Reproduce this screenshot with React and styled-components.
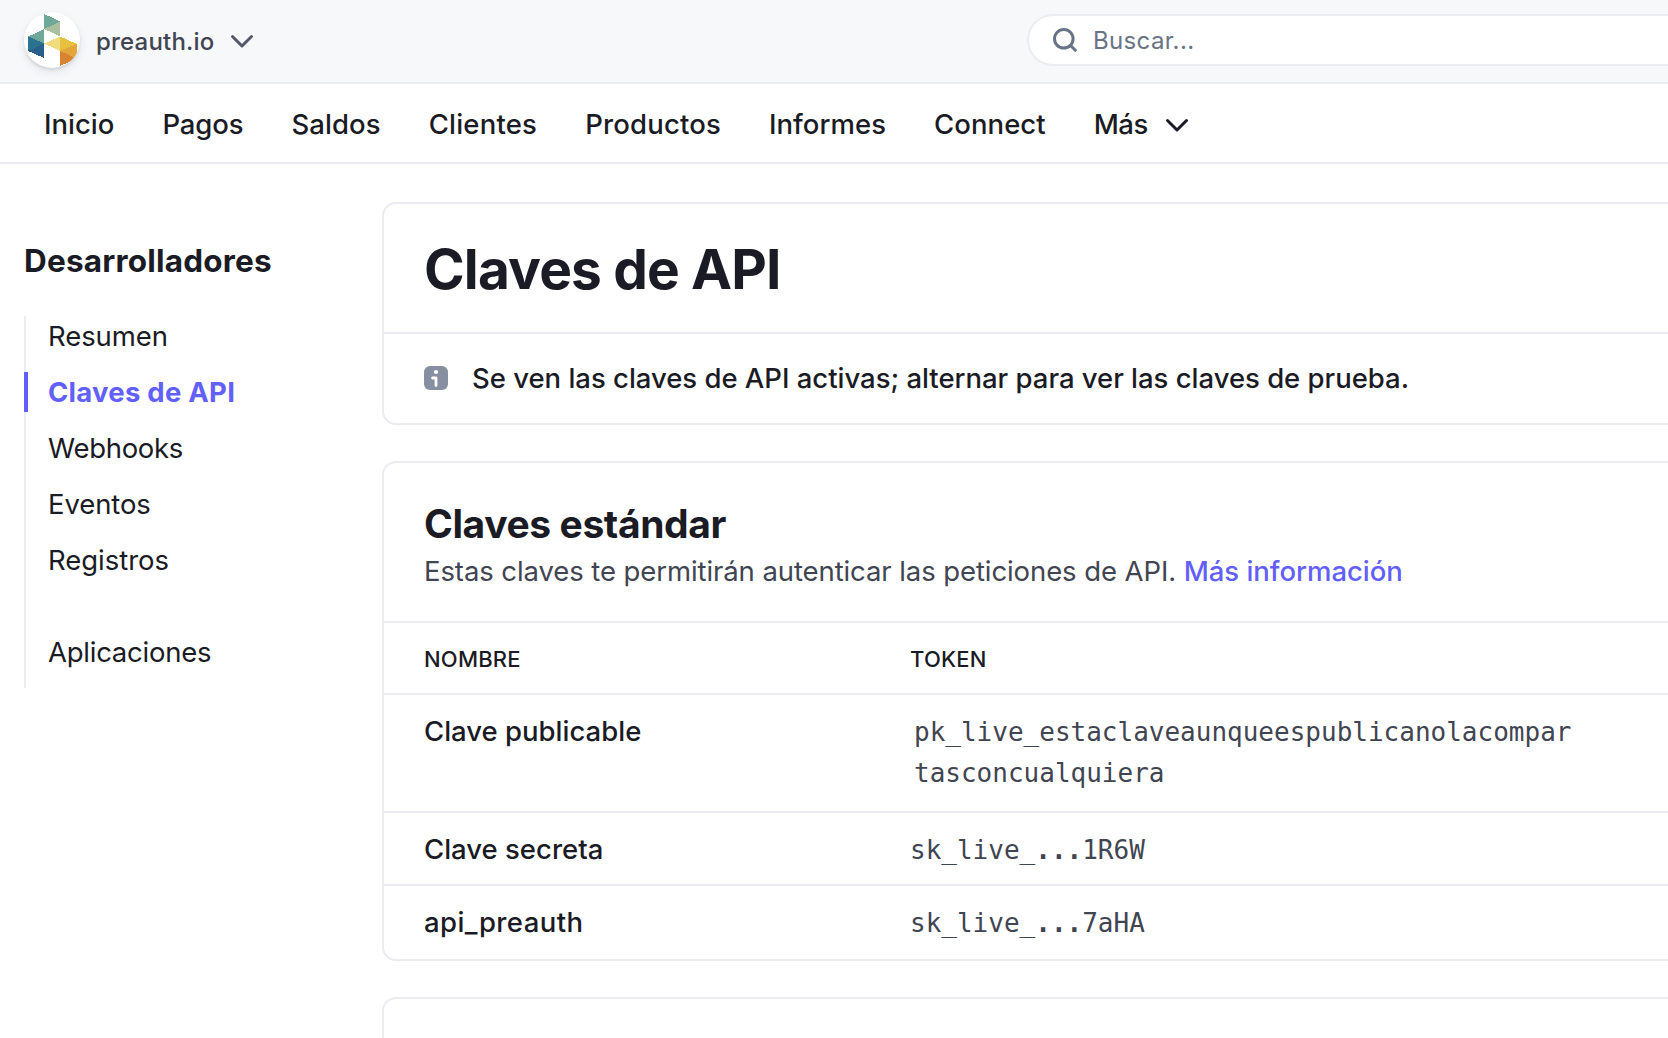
import React from "react";
import styled, { createGlobalStyle, css } from "styled-components";

const line = "#ebecf1";
const ink = "#1a1b25";
const slate = "#414552";
const accent = "#625ffb";

const GlobalStyle = createGlobalStyle`
  * { box-sizing: border-box; }
  body {
    margin: 0;
    overflow: hidden;
    background: #fff;
    color: ${ink};
    font-family: Inter, "Liberation Sans", sans-serif;
    font-size: 27.5px;
    line-height: 40px;
    -webkit-font-smoothing: antialiased;
  }
`;

const Page = styled.div`
  height: 1038px;
  overflow: hidden;
`;

const TopBar = styled.header`
  display: flex;
  align-items: center;
  justify-content: space-between;
  height: 84px;
  padding: 0 0 2px 24px;
  background: #f6f8fa;
  border-bottom: 2px solid ${line};
`;

const Account = styled.div`
  display: flex;
  align-items: center;
  color: ${slate};
  font-size: 24px;
  font-weight: 500;
  > svg { margin-top: 2px; }
`;

const Avatar = styled.div`
  width: 56px;
  height: 56px;
  margin-right: 16px;
  border-radius: 50%;
  background: #fff;
  overflow: hidden;
  box-shadow: 0 4px 10px rgba(60, 66, 87, 0.1), 0 2px 3px rgba(0, 0, 0, 0.1);
  svg { display: block; }
`;

const AccountName = styled.span`
  margin: 3px 15px 0 0;
  letter-spacing: 0.2px;
`;

const Search = styled.div`
  display: flex;
  align-items: center;
  width: 641px;
  height: 52px;
  padding-left: 24px;
  border: 2px solid ${line};
  border-right: 0;
  border-radius: 26px 0 0 26px;
  background: #fff;
  color: #687385;
  font-size: 24px;
  letter-spacing: 0.35px;
  svg { margin-right: 16px; }
  span { padding-top: 2px; }
`;

const NavBar = styled.nav`
  display: flex;
  align-items: center;
  gap: 48px;
  height: 80px;
  padding: 2px 0 0 44px;
  border-bottom: 2px solid ${line};
  font-weight: 500;
`;

const NavItem = styled.a`
  display: flex;
  align-items: center;
  letter-spacing: ${(p) => p.$track || 0}px;
  svg { margin: 2px 0 0 17px; }
`;

const Body = styled.div`
  display: grid;
  grid-template-columns: 358px 1fr;
  padding: 38px 0 0 24px;
`;

const Sidebar = styled.aside`
  padding-top: 39px;
`;

const SideTitle = styled.h2`
  margin: 0 0 35px;
  font-size: 31.5px;
  line-height: 40px;
  font-weight: 700;
  letter-spacing: 0.2px;
`;

const SideList = styled.ul`
  list-style: none;
  margin: 0;
  padding: 0;
  height: 372px;
  border-left: 2px solid ${line};
`;

const SideItem = styled.li`
  height: 40px;
  margin-bottom: 16px;
  margin-left: -2px;
  padding-left: 24px;
  letter-spacing: ${(p) => p.$track || 0}px;
  ${(p) => p.$spaced && css`margin-top: 52px;`}
  ${(p) =>
    p.$active &&
    css`
      padding-left: 20px;
      border-left: 4px solid ${accent};
      color: ${accent};
      font-weight: 700;
    `}
`;

const Main = styled.main`
  display: flex;
  flex-direction: column;
  gap: 36px;
`;

const Card = styled.section`
  height: ${(p) => p.$height}px;
  flex: none;
  border: 2px solid ${line};
  border-right: 0;
  border-radius: 14px 0 0 14px;
`;

const PageTitle = styled.h1`
  margin: 0;
  height: 130px;
  padding: 33px 0 0 40px;
  border-bottom: 2px solid ${line};
  font-size: 55px;
  line-height: 64px;
  font-weight: 700;
  letter-spacing: -0.85px;
`;

const Notice = styled.div`
  display: flex;
  align-items: center;
  height: 87px;
  padding-left: 40px;
  font-weight: 500;
  letter-spacing: -0.02px;
  svg { margin: 1px 24px 0 0; }
`;

const CardHead = styled.div`
  height: 160px;
  padding: 37px 0 0 40px;
  border-bottom: 2px solid ${line};
`;

const CardTitle = styled.h2`
  margin: 0 0 3px;
  font-size: 39px;
  line-height: 48px;
  font-weight: 700;
  letter-spacing: -0.4px;
`;

const Lead = styled.p`
  margin: 0;
  color: ${slate};
  line-height: 41px;
  letter-spacing: -0.09px;
`;

const Link = styled.a`
  color: ${accent};
  font-weight: 500;
  letter-spacing: -0.03px;
`;

const Row = styled.div`
  display: grid;
  grid-template-columns: 486px 1fr;
  height: ${(p) => p.$height}px;
  padding: 17px 0 0 40px;
  border-bottom: ${(p) => (p.$last ? 0 : 2)}px solid ${line};
`;

const HeadRow = styled(Row)`
  padding-top: 16px;
  font-size: 22px;
  font-weight: 500;
  letter-spacing: 0.2px;
`;

const KeyName = styled.div`
  font-weight: 500;
  line-height: 38px;
  letter-spacing: ${(p) => p.$track || 0}px;
`;

const Token = styled.div`
  padding-left: ${(p) => (p.$inset ? 4 : 0)}px;
  color: ${slate};
  font-family: "DejaVu Sans Mono", monospace;
  font-size: 26px;
  line-height: 41px;
`;

const Dots = styled.span`
  font-weight: 700;
`;

const Chevron = ({ color }) => (
  <svg width="24" height="24" viewBox="0 0 24 24" fill="none" stroke={color} strokeWidth="3" strokeLinecap="round" strokeLinejoin="round">
    <path d="M2.5 7.5 12 17l9.5-9.5" />
  </svg>
);

const Logo = () => (
  <svg width="56" height="56" viewBox="0 0 56 56" shapeRendering="crispEdges">
    <path d="M20.300 2 36 9.500 20.300 17z" fill="#6fa898" />
    <path d="M36 9.500v15L20.300 17z" fill="#a9bf9d" />
    <path d="M20.300 17v14.500L4.300 24.500z" fill="#6fa898" />
    <path d="M4.300 24.500v14.500L20.300 31.500z" fill="#2b7190" />
    <path d="M20.300 31.500v14.700L4.300 39z" fill="#28608c" />
    <path d="M36 24.500v14.500l-15.700-7.500z" fill="#f0dc7c" />
    <path d="M36 24.500l16.700 7.300L36 39z" fill="#e8c040" />
    <path d="M52.700 31.800V46.500L36 39z" fill="#e4a53a" />
    <path d="M36 39 52.700 46.500 36 54z" fill="#d98232" />
  </svg>
);

const nav = [
  ["Inicio", 0],
  ["Pagos", -0.12],
  ["Saldos", 0.1],
  ["Clientes", 0.2],
  ["Productos", 0.17],
  ["Informes", 0.05],
  ["Connect", 0.05],
];

const side = [
  { label: "Resumen", track: -0.1 },
  { label: "Claves de API", track: 0.25, active: true },
  { label: "Webhooks", track: -0.3 },
  { label: "Eventos", track: -0.1 },
  { label: "Registros", track: -0.03 },
  { label: "Aplicaciones", track: -0.25, spaced: true },
];

const keys = [
  { name: "Clave publicable", token: ["pk_live_estaclaveaunqueespublicanolacompar", "tasconcualquiera"], height: 118, inset: true },
  { name: "Clave secreta", token: ["sk_live_...1R6W"], height: 73 },
  { name: "api_preauth", track: 0.42, token: ["sk_live_...7aHA"], height: 73, last: true },
];

const TokenLine = ({ text }) => {
  const [head, tail] = text.split("...");
  return (
    <div>
      {head}
      {tail && <Dots>...</Dots>}
      {tail}
    </div>
  );
};

export default function App() {
  return (
    <Page>
      <GlobalStyle />
      <TopBar>
        <Account>
          <Avatar><Logo /></Avatar>
          <AccountName>preauth.io</AccountName>
          <Chevron color="#545969" />
        </Account>
        <Search>
          <svg width="24" height="24" viewBox="0 0 24 24" fill="none" stroke="#687385" strokeWidth="3" strokeLinecap="round">
            <circle cx="10.800" cy="10.800" r="9.300" />
            <path d="M17.800 17.800 22.300 22.300" />
          </svg>
          <span>Buscar...</span>
        </Search>
      </TopBar>
      <NavBar>
        {nav.map(([label, track]) => (
          <NavItem key={label} $track={track}>{label}</NavItem>
        ))}
        <NavItem $track={-0.48}>Más<Chevron color={ink} /></NavItem>
      </NavBar>
      <Body>
        <Sidebar>
          <SideTitle>Desarrolladores</SideTitle>
          <SideList>
            {side.map((s) => (
              <SideItem key={s.label} $active={s.active} $spaced={s.spaced} $track={s.track}>{s.label}</SideItem>
            ))}
          </SideList>
        </Sidebar>
        <Main>
          <Card $height={223}>
            <PageTitle>Claves de API</PageTitle>
            <Notice>
              <svg width="24" height="24" viewBox="0 0 24 24">
                <rect width="24" height="24" rx="6" fill="#8790a0" />
                <circle cx="12" cy="6" r="2.100" fill="#fff" />
                <path d="M8.600 12H12V19.600" fill="none" stroke="#fff" strokeWidth="2.800" strokeLinecap="round" strokeLinejoin="round" />
              </svg>
              <span>Se ven las claves de API activas; alternar para ver las claves de prueba.</span>
            </Notice>
          </Card>
          <Card $height={500}>
            <CardHead>
              <CardTitle>Claves estándar</CardTitle>
              <Lead>
                Estas claves te permitirán autenticar las peticiones de API. <Link>Más información</Link>
              </Lead>
            </CardHead>
            <HeadRow $height={72}>
              <div>NOMBRE</div>
              <div>TOKEN</div>
            </HeadRow>
            {keys.map((k) => (
              <Row key={k.name} $height={k.height} $last={k.last}>
                <KeyName $track={k.track}>{k.name}</KeyName>
                <Token $inset={k.inset}>
                  {k.token.map((t) => <TokenLine key={t} text={t} />)}
                </Token>
              </Row>
            ))}
          </Card>
          <Card $height={100} />
        </Main>
      </Body>
    </Page>
  );
}
